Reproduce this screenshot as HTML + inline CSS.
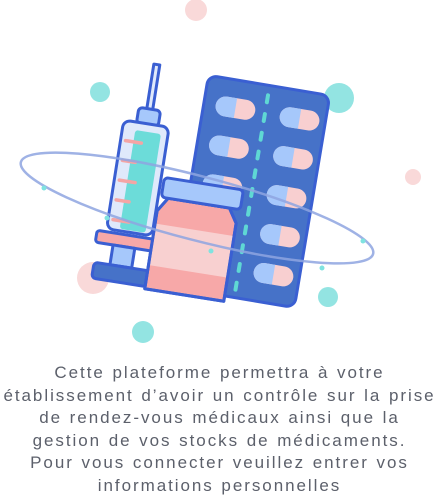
<!DOCTYPE html>
<html><head><meta charset="utf-8"><style>
html,body{margin:0;padding:0;background:#fff;width:439px;height:504px;overflow:hidden}
svg{position:absolute;left:0;top:0}
.t{position:absolute;left:-10px;top:362px;width:459px;text-align:center;font-family:"Liberation Sans",sans-serif;font-size:17px;line-height:22.6px;color:#5c606b;letter-spacing:1.95px;word-spacing:1px;white-space:nowrap}
</style></head><body>
<svg width="439" height="350" viewBox="0 0 439 350">
<g fill="#f9d9d9"><circle cx="196" cy="10" r="11"/><circle cx="413" cy="177" r="8"/><circle cx="93" cy="278" r="16"/></g>
<g fill="#93e4e2"><circle cx="100" cy="92" r="10"/><circle cx="339" cy="98" r="15"/><circle cx="328" cy="297" r="10"/><circle cx="143" cy="332" r="11"/></g>
<g transform="rotate(9.5 252 191)">
<rect x="190" y="84" width="123" height="215" rx="9" fill="#4672c8" stroke="#3a5fd2" stroke-width="3"/>
<line x1="252" y1="94" x2="252" y2="292" stroke="#5fd8d4" stroke-width="4" stroke-linecap="round" stroke-dasharray="7 12"/>
<g id="pl">
<rect x="202" y="102" width="40" height="20" rx="10" fill="#f8cfd0"/>
<path d="M212 102h10v20h-10a10 10 0 0 1 0-20z" fill="#a6c8fb"/>
</g>
<use href="#pl" x="65"/>
<use href="#pl" y="39.5"/><use href="#pl" x="65" y="39.5"/>
<use href="#pl" y="79"/><use href="#pl" x="65" y="79"/>
<use href="#pl" x="65" y="118.5"/><use href="#pl" x="65" y="158"/>
</g>
<g transform="rotate(9 138 177)" stroke="#3a5fd2" stroke-width="3" stroke-linejoin="round">
<rect x="136" y="63" width="6" height="47" fill="#dfe9fb"/>
<rect x="128" y="108" width="22" height="16" rx="4" fill="#a6c8fb"/>
<rect x="115" y="123" width="46" height="110" rx="7" fill="#dfe9fb"/>
<rect x="128" y="131" width="26" height="100" rx="3" fill="#6cdcd9" stroke="none"/>
<g stroke="#f4a5a5" stroke-width="3.5" stroke-linecap="round"><line x1="120" y1="143" x2="136" y2="143"/><line x1="120" y1="163" x2="133" y2="163"/><line x1="120" y1="183" x2="136" y2="183"/><line x1="120" y1="203" x2="133" y2="203"/><line x1="120" y1="223" x2="136" y2="223"/></g>
<rect x="106" y="236" width="58" height="12" rx="3" fill="#f7a8a8"/>
<rect x="124" y="248" width="22" height="20" fill="#a6c8fb"/>
<rect x="108" y="268" width="56" height="16" rx="4" fill="#4672c8"/>
</g>
<g transform="rotate(9 195 240)" stroke="#3a5fd2" stroke-width="3" stroke-linejoin="round">
<path d="M162 203h62l9 14v79h-80v-79z" fill="#f7a8a8"/>
<rect x="154.5" y="230" width="77" height="42" fill="#f8d0d0" stroke="none"/>
<path d="M162 203h62l9 14v79h-80v-79z" fill="none"/>
<rect x="155" y="183" width="80" height="20" rx="4" fill="#a6c8fb"/>
</g>
<g transform="rotate(14.6 197 208)">
<ellipse cx="197" cy="208" rx="182" ry="32" fill="none" stroke="#8ea4e0" stroke-width="2.5" opacity="0.85"/>
</g>
<g fill="#7fe3e0"><circle cx="44" cy="188" r="2.5"/><circle cx="107" cy="218" r="2.5"/><circle cx="211" cy="251" r="2.5"/><circle cx="322" cy="268" r="2.5"/><circle cx="363" cy="241" r="2.5"/></g>
</svg>
<div class="t">Cette plateforme permettra à votre<br>établissement d’avoir un contrôle sur la prise<br>de rendez-vous médicaux ainsi que la<br>gestion de vos stocks de médicaments.<br>Pour vous connecter veuillez entrer vos<br>informations personnelles</div>
</body></html>
